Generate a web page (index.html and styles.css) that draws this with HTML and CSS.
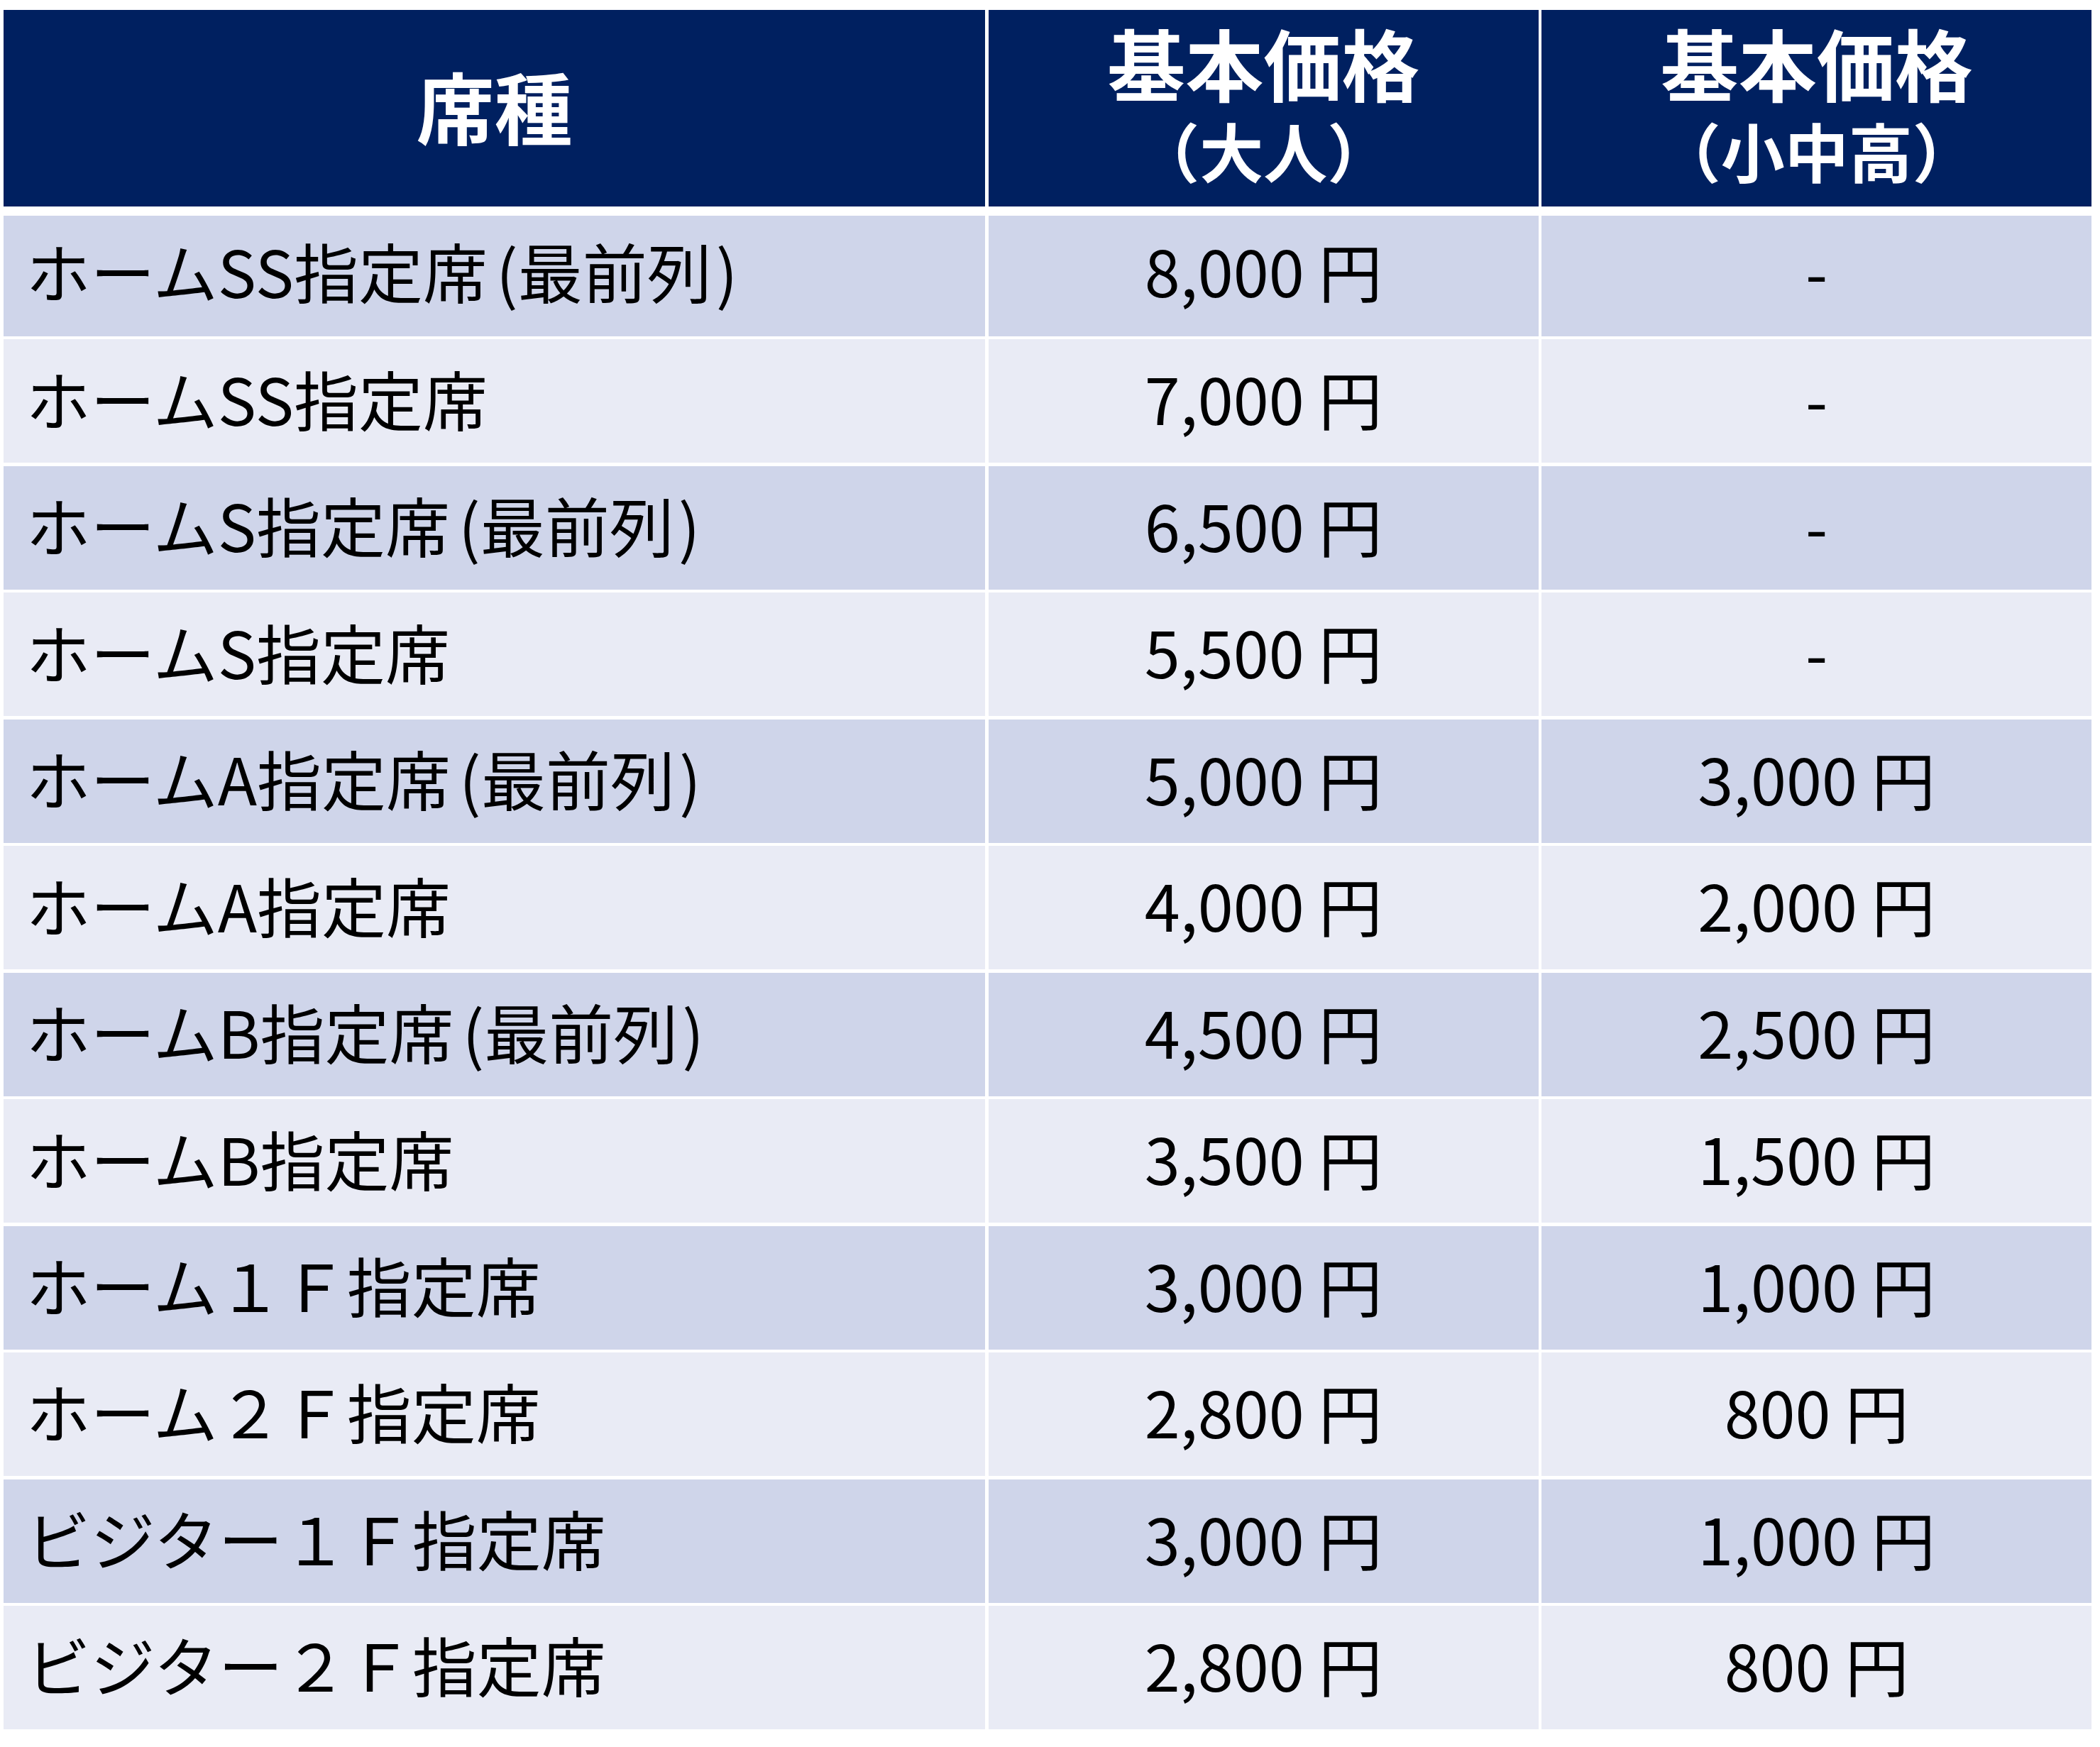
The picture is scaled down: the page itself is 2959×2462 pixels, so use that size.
FILE: index.html
```html
<!DOCTYPE html>
<html lang="ja">
<head>
<meta charset="utf-8">
<title>席種・基本価格</title>
<link rel="stylesheet" href="styles.css">
</head>
<body>
<div class="price-table">
  <div class="cell head head-single"><span>席種</span></div>
  <div class="cell head"><span class="h1">基本価格</span><span class="h2">（大人）</span></div>
  <div class="cell head"><span class="h1">基本価格</span><span class="h2">（小中高）</span></div>

  <div class="cell odd name first">ホームSS指定席<span class="po">(</span>最前列<span class="pc">)</span></div>
  <div class="cell odd price first">8,000 円</div>
  <div class="cell odd price first">-</div>

  <div class="cell even name">ホームSS指定席</div>
  <div class="cell even price">7,000 円</div>
  <div class="cell even price">-</div>

  <div class="cell odd name">ホームS指定席<span class="po">(</span>最前列<span class="pc">)</span></div>
  <div class="cell odd price">6,500 円</div>
  <div class="cell odd price">-</div>

  <div class="cell even name">ホームS指定席</div>
  <div class="cell even price">5,500 円</div>
  <div class="cell even price">-</div>

  <div class="cell odd name">ホームA指定席<span class="po">(</span>最前列<span class="pc">)</span></div>
  <div class="cell odd price">5,000 円</div>
  <div class="cell odd price">3,000 円</div>

  <div class="cell even name">ホームA指定席</div>
  <div class="cell even price">4,000 円</div>
  <div class="cell even price">2,000 円</div>

  <div class="cell odd name">ホームB指定席<span class="po">(</span>最前列<span class="pc">)</span></div>
  <div class="cell odd price">4,500 円</div>
  <div class="cell odd price">2,500 円</div>

  <div class="cell even name">ホームB指定席</div>
  <div class="cell even price">3,500 円</div>
  <div class="cell even price">1,500 円</div>

  <div class="cell odd name">ホーム１Ｆ指定席</div>
  <div class="cell odd price">3,000 円</div>
  <div class="cell odd price">1,000 円</div>

  <div class="cell even name">ホーム２Ｆ指定席</div>
  <div class="cell even price">2,800 円</div>
  <div class="cell even price">800 円</div>

  <div class="cell odd name">ビジター１Ｆ指定席</div>
  <div class="cell odd price">3,000 円</div>
  <div class="cell odd price">1,000 円</div>

  <div class="cell even name">ビジター２Ｆ指定席</div>
  <div class="cell even price">2,800 円</div>
  <div class="cell even price">800 円</div>
</div>
</body>
</html>
```

FILE: styles.css
```css
html, body {
  margin: 0;
  padding: 0;
  background: #ffffff;
}

body {
  font-family: "Noto Sans CJK JP", "Noto Sans", sans-serif;
  color: #000000;
}

.price-table {
  display: grid;
  grid-template-columns: 1383.8px 775px 774.7px;
  grid-template-rows: 285.7px 169.4px repeat(11, 173.9px);
  column-gap: 4.5px;
  row-gap: 4.6px;
  margin: 14px 0 0 4.5px;
  width: max-content;
}

.cell {
  display: flex;
  align-items: center;
  box-sizing: border-box;
  min-width: 0;
}

.head {
  background: #002060;
  color: #ffffff;
  font-weight: 700;
  margin-bottom: 9px;
  flex-direction: column;
  justify-content: center;
  text-align: center;
}

.head-single {
  font-size: 110px;
  line-height: 1.2;
  padding-bottom: 8px;
}

.h1 {
  display: block;
  font-size: 110px;
  line-height: 117px;
}

.h2 {
  display: block;
  font-size: 90px;
  line-height: 130px;
}

.odd {
  background: #cfd5ea;
}

.even {
  background: #e9ebf5;
}

.name,
.price {
  font-size: 90px;
  line-height: 1.2;
  padding-bottom: 10px;
  white-space: nowrap;
}

.name {
  font-size: 91px;
  justify-content: flex-start;
  padding-left: 32px;
}

.po {
  margin-left: 12px;
}

.pc {
  margin-left: 6px;
}

.price {
  justify-content: center;
}

.first {
  padding-bottom: 17px;
}
```
